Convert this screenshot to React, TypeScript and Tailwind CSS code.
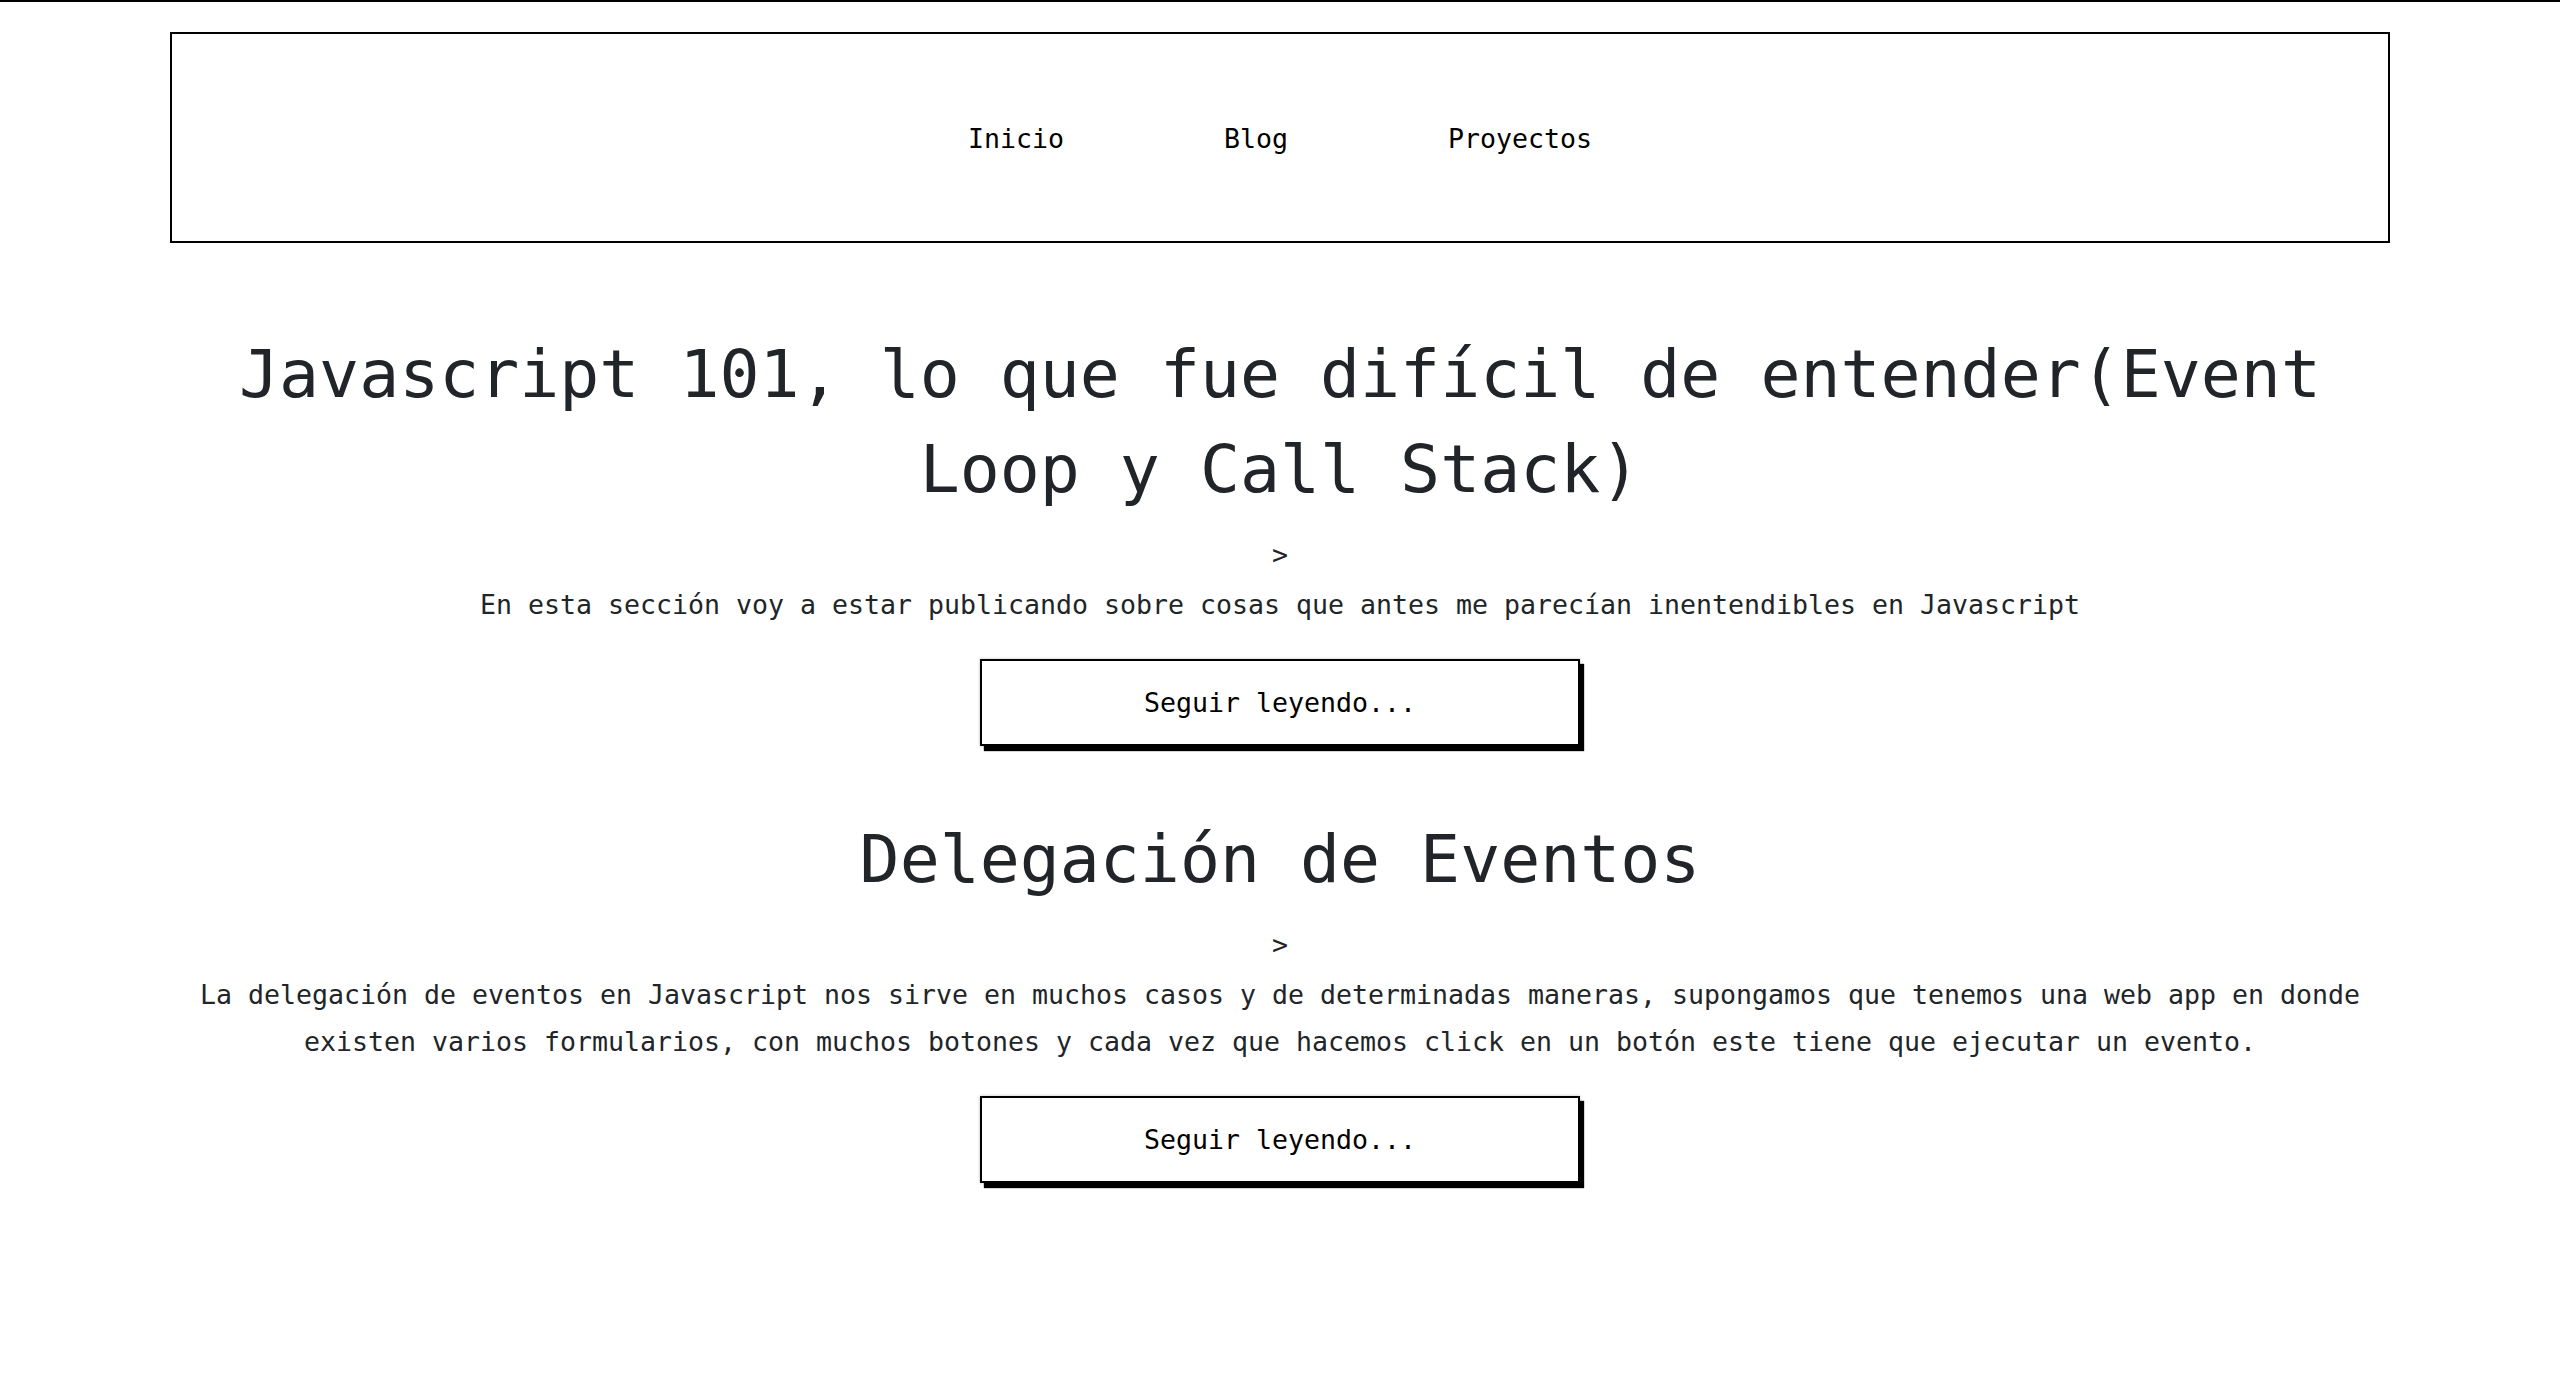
import React from "react";

const mono = { fontFamily: '"DejaVu Sans Mono", "Liberation Mono", monospace' };

function Post({ title, text }: { title: string; text: string }) {
  return (
    <article className="flex flex-col items-center text-center">
      <h2 className="text-[66.5px] leading-[95px] font-normal text-[#212529]">{title}</h2>
      <div className="mt-[14px] text-[26.58px] leading-[47px] text-[#212529]">&gt;</div>
      <p className="mt-[3px] text-[26.58px] leading-[47px] text-[#212529]">{text}</p>
      <button className="mt-[31px] w-[600px] h-[87px] border-2 border-black bg-white text-[26.58px] text-black shadow-[4px_5px_1px_#000,0_0_3px_rgba(0,0,0,0.25)]">
        Seguir leyendo...
      </button>
    </article>
  );
}

export default function App() {
  return (
    <div className="min-h-[1398px] bg-white border-t-2 border-black" style={mono}>
      <div className="w-[2220px] mx-auto pt-[30px]">
        <header className="h-[211px] border-2 border-black flex items-center justify-center">
          <nav className="flex gap-[160px] pt-[4px] text-[26.58px] leading-none text-black">
            <a>Inicio</a>
            <a>Blog</a>
            <a>Proyectos</a>
          </nav>
        </header>
        <main className="flex flex-col gap-[66px] pt-[84px]">
          <Post
            title="Javascript 101, lo que fue difícil de entender(Event Loop y Call Stack)"
            text="En esta sección voy a estar publicando sobre cosas que antes me parecían inentendibles en Javascript"
          />
          <Post
            title="Delegación de Eventos"
            text="La delegación de eventos en Javascript nos sirve en muchos casos y de determinadas maneras, supongamos que tenemos una web app en donde existen varios formularios, con muchos botones y cada vez que hacemos click en un botón este tiene que ejecutar un evento."
          />
        </main>
      </div>
    </div>
  );
}
